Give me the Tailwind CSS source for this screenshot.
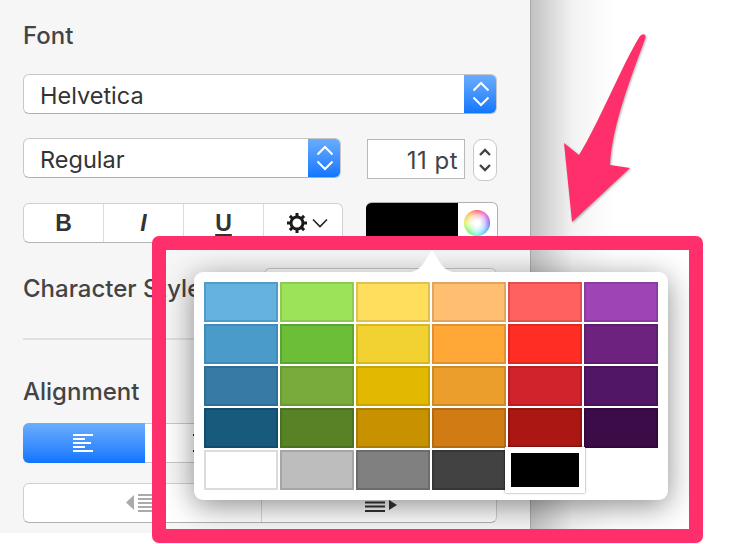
<!DOCTYPE html>
<html lang="en">
<head>
  <meta charset="UTF-8" />
  <title>Text colour picker</title>
  <script src="https://cdn.jsdelivr.net/npm/@tailwindcss/browser@4"></script>
</head>
<body class="bg-white">
  <div class="relative flex w-[744px] h-[544px] overflow-hidden bg-white font-['Inter','Liberation_Sans',sans-serif] text-[#333]">

    <!-- inspector sidebar -->
    <aside class="w-[531px] h-[533px] shrink-0 bg-[#f6f6f6] border-r border-[#a8a8a8] pl-[23px] pr-[33px] pt-[20px]">
      <h2 class="h-[32px] leading-[32px] text-[24px] font-medium text-[#444]">Font</h2>

      <div class="mt-[22px] h-[40px] flex rounded-[6px] bg-white border border-[#c8c8c8] border-b-[#b0b0b0] overflow-hidden">
        <div class="flex-1 pl-[16px] leading-[41px] text-[23.5px]">Helvetica</div>
        <div class="w-[33px] -my-px -mr-px flex items-center justify-center bg-linear-to-b from-[#6aaefc] to-[#0a74ff]">
          <svg width="18" height="30" viewBox="0 0 18 30" fill="none" stroke="#fff" stroke-width="2"><path d="M1.500 11.500 9 4l7.500 7.500M1.500 18.500 9 26l7.500-7.500"/></svg>
        </div>
      </div>

      <div class="mt-[24px] h-[40px] flex">
        <div class="w-[318px] h-[40px] flex rounded-[6px] bg-white border border-[#c8c8c8] border-b-[#b0b0b0] overflow-hidden">
          <div class="flex-1 pl-[16px] leading-[41px] text-[23.5px]">Regular</div>
          <div class="w-[33px] -my-px -mr-px flex items-center justify-center bg-linear-to-b from-[#6aaefc] to-[#0a74ff]">
            <svg width="18" height="30" viewBox="0 0 18 30" fill="none" stroke="#fff" stroke-width="2"><path d="M1.500 11.500 9 4l7.500 7.500M1.500 18.500 9 26l7.500-7.500"/></svg>
          </div>
        </div>
        <div class="ml-[26px] mt-px w-[98px] h-[40px] shrink-0 bg-white border border-[#b8b8b8] pr-[6px] text-right leading-[42px] text-[24px] tracking-[0.5px] text-[#444]">11 pt</div>
        <div class="ml-[8px] mt-px w-[24px] h-[42px] shrink-0 flex items-center justify-center rounded-[9px] bg-white border border-[#c8c8c8]">
          <svg width="14" height="30" viewBox="0 0 14 30" fill="none" stroke="#444" stroke-width="2.4"><path d="M2 10l5-5 5 5M2 20l5 5 5-5"/></svg>
        </div>
      </div>

      <div class="mt-[25px] h-[40px] flex justify-between">
        <div class="w-[320px] h-[40px] grid grid-cols-[80px_80px_80px_1fr] rounded-[6px] bg-white border border-[#d0d0d0] border-b-[#b4b4b4] divide-x divide-[#dcdcdc]">
          <div class="flex items-center justify-center text-[23px] font-bold font-['Liberation_Sans',sans-serif]">B</div>
          <div class="flex items-center justify-center text-[23px] font-bold italic font-['Liberation_Sans',sans-serif]">I</div>
          <div class="flex items-center justify-center text-[23px] font-bold underline decoration-2 underline-offset-[3px] font-['Liberation_Sans',sans-serif]">U</div>
          <div class="flex items-center justify-center gap-[4px] pl-[8px]">
            <svg width="22" height="22" viewBox="0 0 22 22" fill="none" stroke="#1a1a1a"><circle cx="11" cy="11" r="6" stroke-width="3"/><path stroke-width="3" d="M11 1v4M11 17v4M1 11h4M17 11h4M3.900 3.900l2.800 2.800M15.300 15.300l2.800 2.800M3.900 18.100l2.800-2.800M15.300 6.700l2.800-2.800"/></svg>
            <svg width="16" height="10" viewBox="0 0 16 10" fill="none" stroke="#222" stroke-width="1.6"><path d="M1 1.500 8 8.500l7-7"/></svg>
          </div>
        </div>
        <div class="-mt-px mr-[-1px] w-[132px] h-[41px] flex rounded-[6px] border border-l-0 border-[#b0b0b0] bg-white overflow-hidden">
          <div class="w-[92px] -my-px bg-black"></div>
          <div class="flex-1 flex items-center justify-center pr-[2px]">
            <div class="relative w-[26px] h-[26px] rounded-full bg-[conic-gradient(#ff3040,#e030d0,#4a40f0,#30a8ff,#40f0e0,#50f050,#d0f030,#ffa820,#ff3040)]">
              <div class="absolute inset-0 rounded-full bg-[radial-gradient(circle,#ffffff_15%,rgba(255,255,255,0.7)_45%,rgba(255,255,255,0)_85%)]"></div>
            </div>
          </div>
        </div>
      </div>

      <div class="mt-[25px] h-[40px] flex justify-between items-center">
        <h2 class="mt-[2px] h-[32px] leading-[32px] text-[24px] font-medium text-[#444]">Character Style</h2>
        <div class="w-[233px] h-[40px] rounded-[6px] bg-white border border-[#c8c8c8]"></div>
      </div>

      <div class="mt-[30px] -mr-[33px] h-[2px] bg-[#e0e0e0]"></div>

      <h2 class="mt-[36px] h-[32px] leading-[32px] text-[24px] font-medium text-[#444]">Alignment</h2>

      <div class="mt-[15px] h-[40px] flex rounded-[6px] bg-white border border-[#c8c8c8]">
        <div class="w-[122px] -my-px -ml-px pr-[2px] rounded-l-[6px] flex items-center justify-center bg-linear-to-b from-[#6aaefc] to-[#0a74ff]">
          <svg width="20" height="18" viewBox="0 0 20 18" fill="#fff"><path d="M0 0h20v2H0zM0 4h12v2H0zM0 8h18v2H0zM0 12h12v2H0zM0 16h20v2H0z"/></svg>
        </div>
        <div class="w-[117px] flex items-center justify-center">
          <svg width="22" height="18" viewBox="0 0 22 18" fill="#222"><path d="M0 0h22v2H0zM4 4h14v2H4zM1 8h20v2H1zM4 12h14v2H4zM0 16h22v2H0z"/></svg>
        </div>
      </div>

      <div class="mt-[20px] h-[40px] grid grid-cols-[238px_1fr] rounded-[6px] bg-white border border-[#d0d0d0] border-b-[#b0b0b0] divide-x divide-[#d8d8d8]">
        <div class="flex items-center justify-center pr-[8px]">
          <svg width="26" height="18" viewBox="0 0 26 18" fill="#aaa"><path d="M8 1v15L0 8.500z"/><path d="M12 0h14v2H12zM12 4h14v2H12zM12 8h14v2H12zM12 12h14v2H12zM12 16h14v2H12z"/></svg>
        </div>
        <div class="flex items-center justify-center pl-[4px] pt-[6px]">
          <svg width="32" height="12" viewBox="0 0 32 12" fill="#333"><path d="M24 0v10l8-5z"/><path d="M0 1.500h20v2H0zM0 5.500h20v2H0zM0 10h20v2H0z"/></svg>
        </div>
      </div>
    </aside>

    <!-- page edge shadow -->
    <div class="w-[84px] h-[533px] bg-linear-to-r from-[#c2c2c2] via-[#f3f3f3] via-50% to-white"></div>

    <!-- colour popover -->
    <div class="absolute left-[194px] top-[272px] w-[474px] h-[228px] rounded-[9px] bg-white p-[10px] shadow-[0_6px_30px_rgba(0,0,0,0.45)]">
      <svg class="absolute left-[212px] top-[-24px]" width="52" height="25" viewBox="0 0 52 25" fill="#fff"><path d="M0 25C8 24 13 22 17 16L26 2l9 14c4 6 9 8 17 9z"/></svg>
      <div class="relative grid grid-cols-[repeat(6,74px)] grid-rows-[repeat(5,40px)] gap-[2px]">
        <div class="bg-[#65b1e0] border-2 border-[#4f9cc8]"></div>
        <div class="bg-[#9ce35a] border-2 border-[#8cca50]"></div>
        <div class="bg-[#ffde5e] border-2 border-[#e0c04f]"></div>
        <div class="bg-[#ffbe70] border-2 border-[#e0a55f]"></div>
        <div class="bg-[#ff6060] border-2 border-[#e05050]"></div>
        <div class="bg-[#9f44b4] border-2 border-[#8a3da0]"></div>

        <div class="bg-[#4a9aca] border-2 border-[#3f8cb8]"></div>
        <div class="bg-[#6cbe38] border-2 border-[#5ca52e]"></div>
        <div class="bg-[#f2d230] border-2 border-[#d8b820]"></div>
        <div class="bg-[#ffa838] border-2 border-[#e09030]"></div>
        <div class="bg-[#ff2d24] border-2 border-[#e0281f]"></div>
        <div class="bg-[#6d2280] border-2 border-[#5e1e70]"></div>

        <div class="bg-[#367aa5] border-2 border-[#2e6d95]"></div>
        <div class="bg-[#79ab3c] border-2 border-[#6a9a32]"></div>
        <div class="bg-[#e2b900] border-2 border-[#c8a400]"></div>
        <div class="bg-[#ec9e2c] border-2 border-[#d08a24]"></div>
        <div class="bg-[#d0232c] border-2 border-[#b81e26]"></div>
        <div class="bg-[#521666] border-2 border-[#47125a]"></div>

        <div class="bg-[#175a7c] border-2 border-[#124c6c]"></div>
        <div class="bg-[#578226] border-2 border-[#4a7220]"></div>
        <div class="bg-[#c79100] border-2 border-[#ad7d00]"></div>
        <div class="bg-[#d07b14] border-2 border-[#b56a10]"></div>
        <div class="bg-[#ab1712] border-2 border-[#95130f]"></div>
        <div class="bg-[#3c0c48] border-2 border-[#34083e]"></div>

        <div class="bg-white border-2 border-[#dcdcdc]"></div>
        <div class="bg-[#bdbdbd] border-2 border-[#a5a5a5]"></div>
        <div class="bg-[#808080] border-2 border-[#6c6c6c]"></div>
        <div class="bg-[#424242] border-2 border-[#363636]"></div>
        <div class="relative">
          <div class="absolute -inset-x-[3px] -inset-y-[3px] bg-white p-[6px] shadow-[0_0_2px_rgba(0,0,0,0.5)]">
            <div class="w-full h-full bg-black"></div>
          </div>
        </div>
      </div>
    </div>

    <!-- annotation: red frame and arrow -->
    <div class="absolute left-[152px] top-[236px] w-[551px] h-[307px] rounded-[7px] border-[14px] border-[#ff2f6b]"></div>
    <svg class="absolute left-[555px] top-[28px] drop-shadow-[1px_1px_1px_rgba(0,0,0,0.3)]" width="100" height="200" viewBox="555 28 100 200" fill="#ff2f6b">
      <path d="M640 36q3-3 5-1 1 1 0 4C632 75 612 125 610 165L630 168 572 222 564 143 579 155C598 125 622 65 640 36z"/>
    </svg>
  </div>
</body>
</html>
